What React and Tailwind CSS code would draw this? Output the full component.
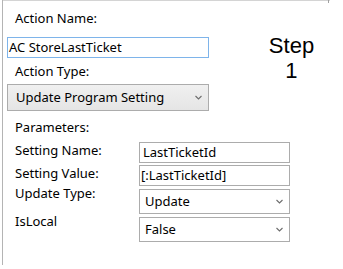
import React from "react";

const Chevron = () => (
  <svg width="7" height="5" viewBox="0 0 7 5" className="shrink-0">
    <path d="M0.5 1 L3.5 4 L6.5 1" fill="none" stroke="#6d6d6d" strokeWidth="1.1" />
  </svg>
);

export default function App() {
  return (
    <div
      className="w-[343px] h-[269px] bg-white overflow-hidden text-black text-[13px] leading-[17px] relative"
      style={{ fontFamily: '"Noto Sans", "Open Sans", sans-serif' }}
    >
      <div className="h-[1px] bg-[#d4d4d4] ml-[2px] w-[328px]" />
      <div className="absolute left-[328px] top-0 w-[1px] h-[3px] bg-[#a0a0a0]" />
      <div className="ml-[2px] w-[1px] h-[265px] bg-[#b4b4b4] absolute left-0 top-0" />
      <div className="pl-[7px]">
        <div className="flex">
          <div className="w-[202px] flex flex-col">
            <div className="pl-[8px] mt-[9px] h-[17px]">Action Name:</div>
            <div className="mt-[10px] h-[21px] border border-[#7eb4ea] pl-[1px] flex items-center">
              AC StoreLastTicket
            </div>
            <div className="pl-[8px] mt-[5px] h-[17px]">Action Type:</div>
            <div className="mt-[4px] h-[27px] border border-[#acacac] bg-gradient-to-b from-[#f0f0f0] to-[#e5e5e5] flex items-center justify-between pl-[8px] pr-[6px]">
              <span>Update Program Setting</span>
              <Chevron />
            </div>
            <div className="pl-[8px] mt-[8px] h-[17px]">Parameters:</div>
          </div>
          <div className="flex-1 flex justify-center pt-[32px] pl-[31px]">
            <div
              className="text-center text-[22px] leading-[25px]"
              style={{ fontFamily: '"Liberation Sans", Arial, sans-serif' }}
            >
              Step
              <br />1
            </div>
          </div>
        </div>
        <div className="mt-[6px] flex flex-col">
          <div className="flex h-[21px]">
            <div className="w-[132px] pl-[8px]">Setting Name:</div>
            <div className="w-[151px] h-[21px] border border-[#acacac] pl-[3px] flex items-center">LastTicketId</div>
          </div>
          <div className="flex h-[21px] mt-[2px]">
            <div className="w-[132px] pl-[8px]">Setting Value:</div>
            <div className="w-[151px] h-[21px] border border-[#acacac] pl-[1px] flex items-center">[:LastTicketId]</div>
          </div>
          <div className="flex h-[25px] mt-[3px]">
            <div className="w-[132px] pl-[8px] -mt-[4px]">Update Type:</div>
            <div className="w-[151px] h-[25px] border border-[#acacac] pl-[5px] pr-[6px] flex items-center justify-between">
              <span>Update</span>
              <Chevron />
            </div>
          </div>
          <div className="flex h-[25px] mt-[3px]">
            <div className="w-[132px] pl-[8px] -mt-[4px]">IsLocal</div>
            <div className="w-[151px] h-[25px] border border-[#acacac] pl-[5px] pr-[6px] flex items-center justify-between">
              <span>False</span>
              <Chevron />
            </div>
          </div>
        </div>
      </div>
    </div>
  );
}
